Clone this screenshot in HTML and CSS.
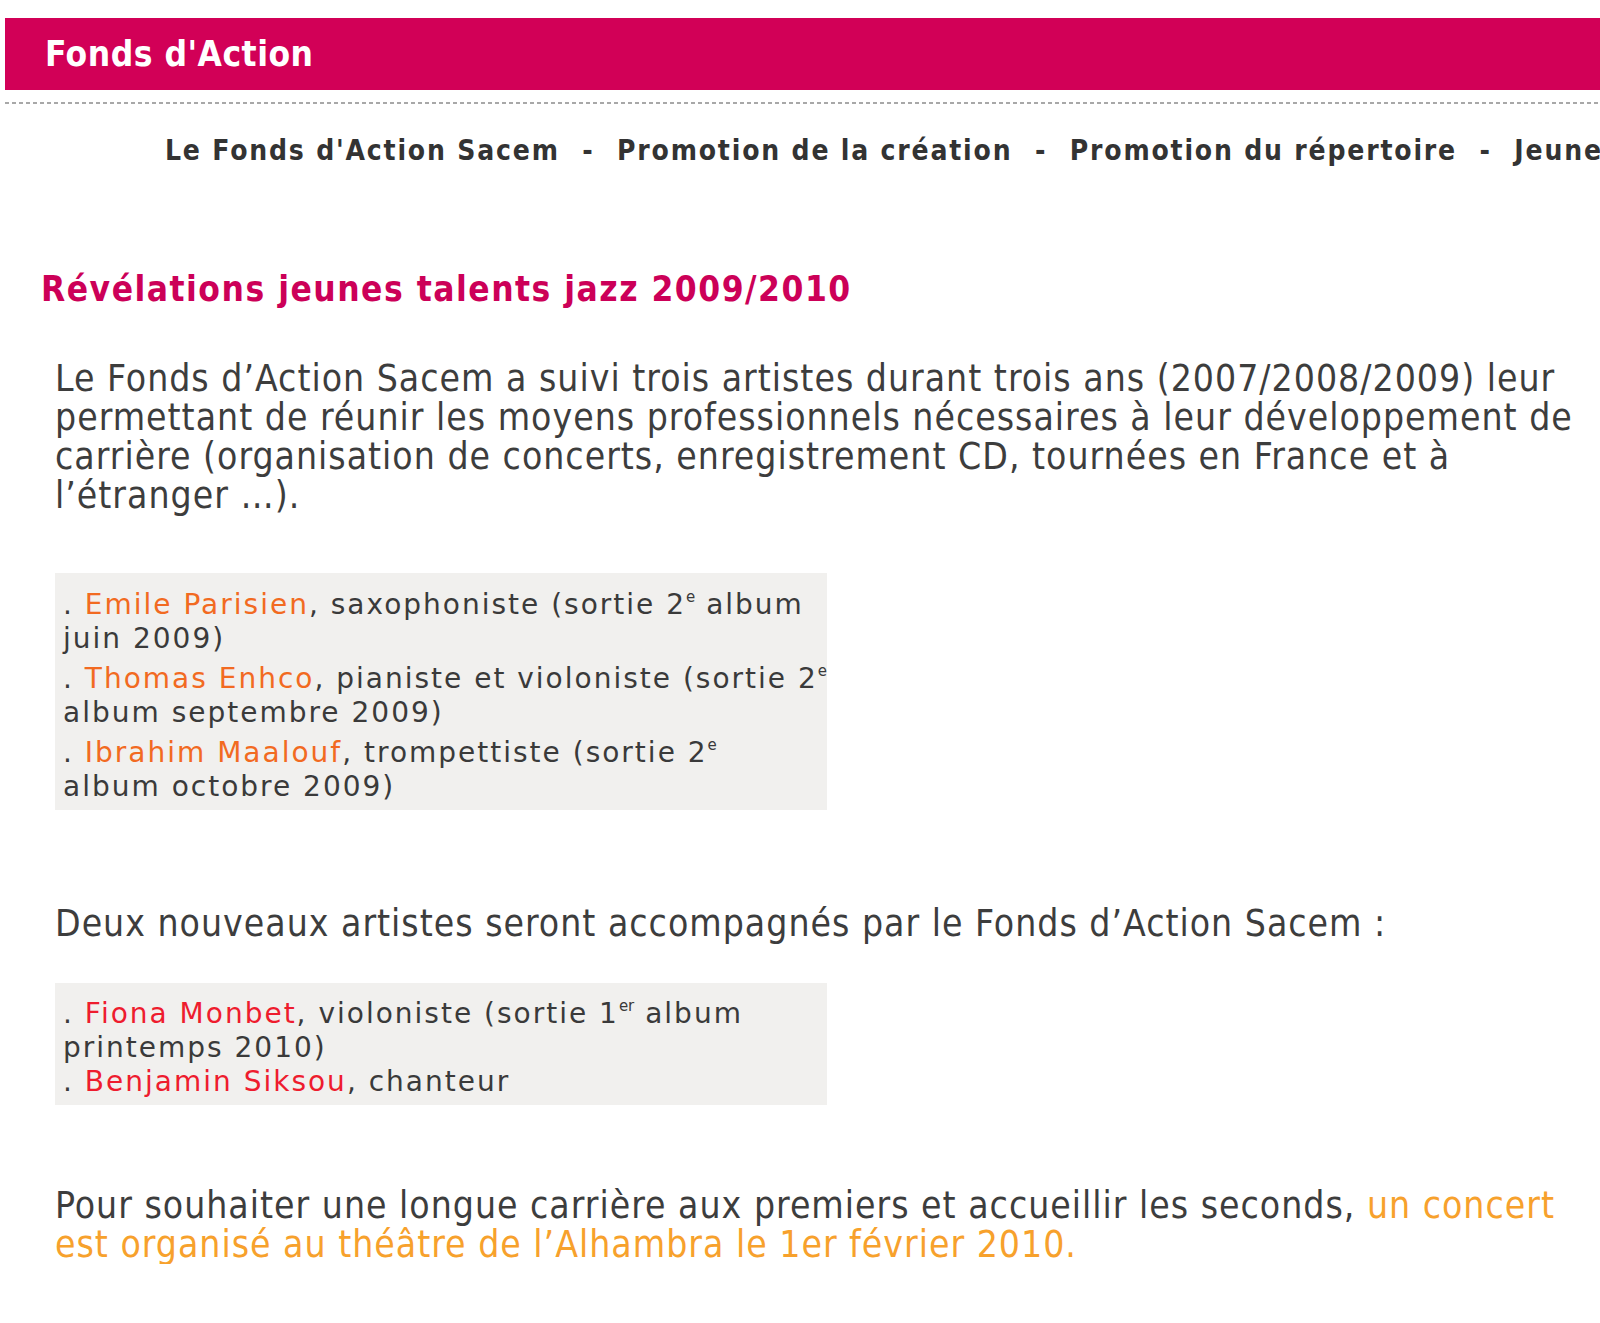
FILE: index.html
```html
<!DOCTYPE html>
<html lang="fr">
<head>
    <meta charset="UTF-8">
    <meta name="viewport" content="width=device-width, initial-scale=1.0">
    <title>Fonds d'Action - Révélations jeunes talents jazz</title>
    <link rel="stylesheet" href="styles.css">
</head>
<body>
    <div class="banner">
        <div class="banner-title">Fonds d'Action</div>
    </div>
    <div class="rule"></div>

    <div class="nav">
        <a href="#">Le Fonds d'Action Sacem</a>
        <span class="sep">-</span>
        <a href="#">Promotion de la création</a>
        <span class="sep">-</span>
        <a href="#">Promotion du répertoire</a>
        <span class="sep">-</span>
        <a href="#">Jeunes talents</a>
    </div>

    <div class="content">
        <h1>Révélations jeunes talents jazz 2009/2010</h1>

        <p class="text intro">Le Fonds d’Action Sacem a suivi trois artistes durant trois ans (2007/2008/2009) leur permettant de réunir les moyens professionnels nécessaires à leur développement de carrière (organisation de concerts, enregistrement CD, tournées en France et à l’étranger …).</p>

        <div class="artists">
            <div class="artist">. <a href="#" class="name">Emile Parisien</a>, saxophoniste (sortie 2<sup>e</sup> album<br>juin 2009)</div>
            <div class="artist">. <a href="#" class="name">Thomas Enhco</a>, pianiste et violoniste (sortie 2<sup>e</sup><br>album septembre 2009)</div>
            <div class="artist">. <a href="#" class="name">Ibrahim Maalouf</a>, trompettiste (sortie 2<sup>e</sup><br>album octobre 2009)</div>
        </div>

        <p class="text next">Deux nouveaux artistes seront accompagnés par le Fonds d’Action Sacem :</p>

        <div class="artists artists-new">
            . <a href="#" class="name new">Fiona Monbet</a>, violoniste (sortie 1<sup>er</sup> album<br>
            printemps 2010)<br>
            . <a href="#" class="name new">Benjamin Siksou</a>, chanteur
        </div>

        <p class="text outro">Pour souhaiter une longue carrière aux premiers et accueillir les seconds, <a href="#" class="concert">un concert est organisé au théâtre de l’Alhambra le 1er février 2010.</a></p>
    </div>
</body>
</html>
```

FILE: styles.css
```css
* {
    margin: 0;
    padding: 0;
    box-sizing: border-box;
}

body {
    font-family: "DejaVu Sans Condensed", "DejaVu Sans", sans-serif;
    font-stretch: condensed;
    background: #fff;
    color: #3d3d3d;
    overflow: hidden;
}

a {
    text-decoration: none;
}

.banner {
    margin: 18px 0 0 5px;
    height: 72px;
    background: #d20057;
    padding-left: 40px;
    display: flex;
    align-items: center;
}

.banner-title {
    color: #fff;
    font-size: 35px;
    font-weight: bold;
    letter-spacing: 0.5px;
}

.rule {
    margin: 12px 0 0 5px;
    height: 2px;
    background: repeating-linear-gradient(90deg, #a8a8a8 0, #a8a8a8 4px, transparent 4px, transparent 7px);
}

.nav {
    margin-top: 27px;
    padding-left: 165px;
    line-height: 40px;
    white-space: nowrap;
    overflow: hidden;
    font-size: 28px;
    font-weight: bold;
    letter-spacing: 1.8px;
}

.nav a {
    color: #333;
}

.nav .sep {
    color: #333;
    margin: 0 12px;
}

.content {
    padding-left: 55px;
}

h1 {
    margin: 98px 0 0 -14px;
    font-size: 35px;
    line-height: 40px;
    letter-spacing: 1.5px;
    color: #cc0058;
}

.text {
    font-size: 37px;
    line-height: 39px;
    letter-spacing: 1px;
}

.intro {
    margin-top: 50px;
    max-width: 1540px;
}

.artists {
    width: 772px;
    margin-top: 58px;
    padding: 15px 8px 6px;
    background: #f1f0ee;
    font-family: "DejaVu Sans", sans-serif;
    font-stretch: normal;
    font-size: 28px;
    line-height: 34px;
    letter-spacing: 2px;
    color: #3a3a3a;
    white-space: nowrap;
}

.artist + .artist {
    margin-top: 6px;
}

.artists sup {
    font-size: 15px;
    line-height: 0;
    vertical-align: 12px;
    letter-spacing: 0;
}

.name {
    color: #f26a21;
}

.name.new {
    color: #ee1c2e;
}

.next {
    margin-top: 94px;
}

.artists-new {
    margin-top: 40px;
    padding-top: 14px;
}

.outro {
    margin-top: 81px;
    max-width: 1540px;
}

.concert {
    color: #f7a12c;
}
```
